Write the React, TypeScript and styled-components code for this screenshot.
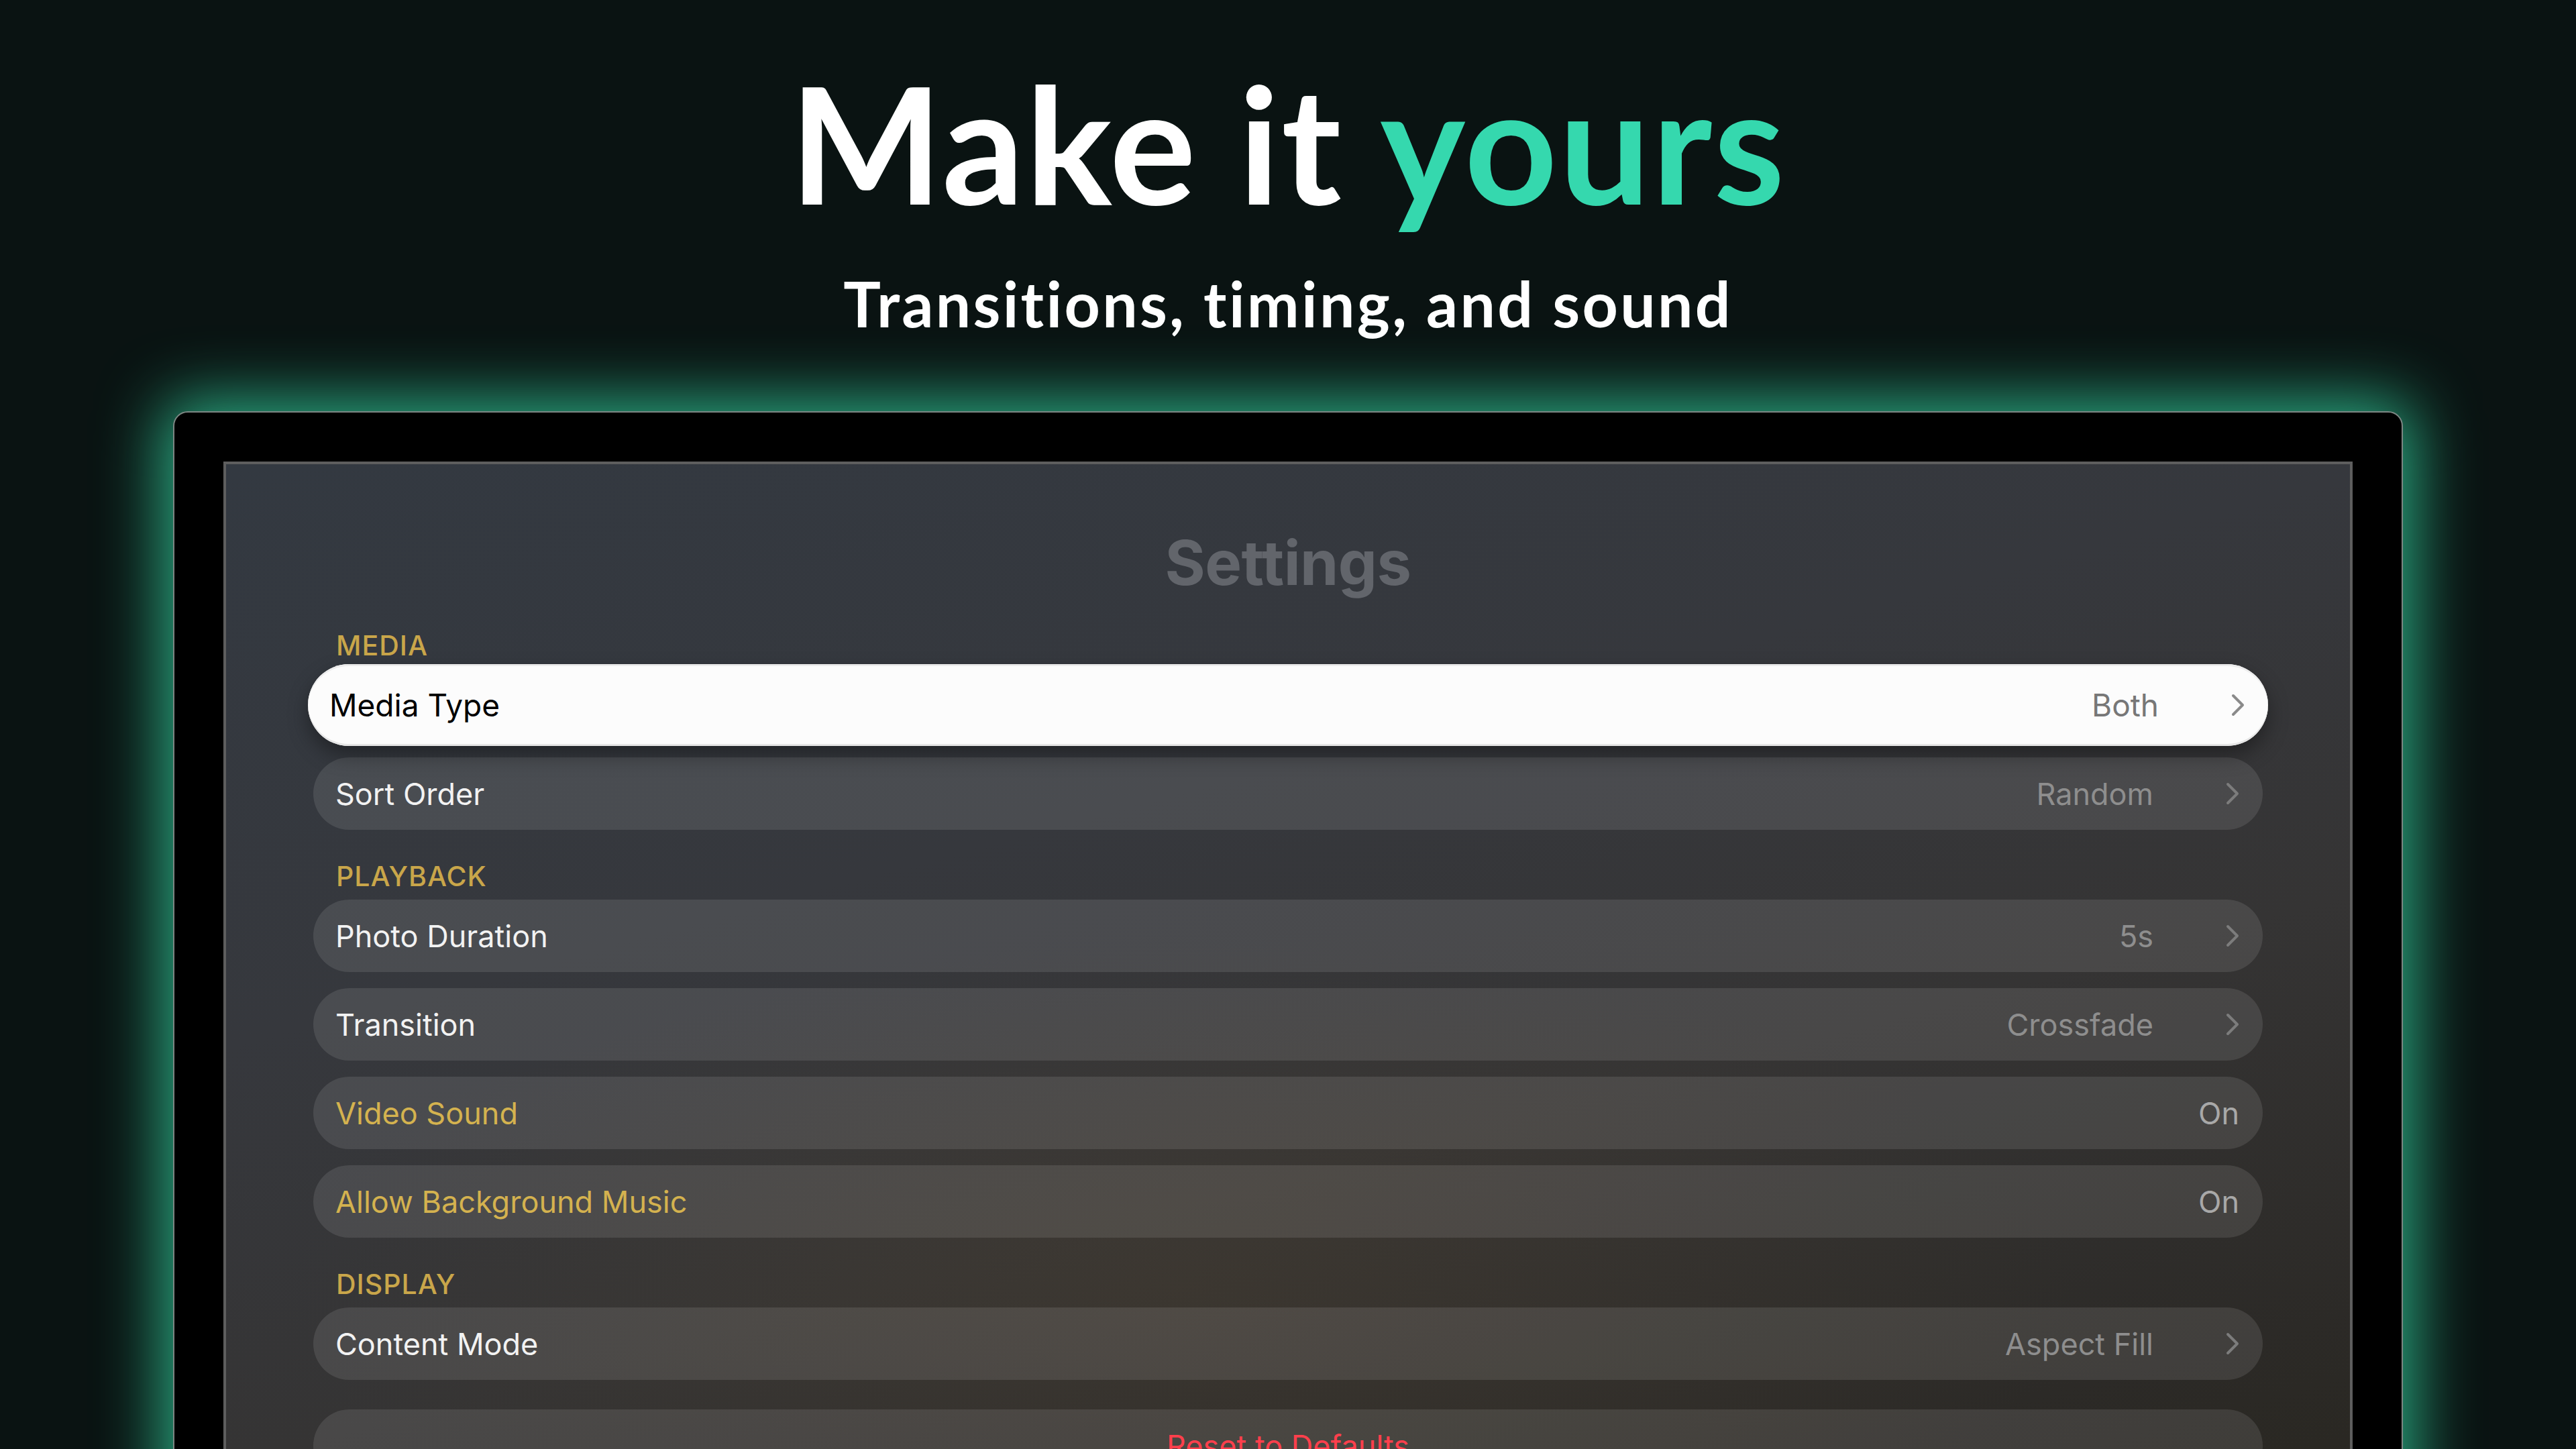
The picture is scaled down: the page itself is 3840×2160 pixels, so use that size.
import React from 'react';
import styled, { createGlobalStyle } from 'styled-components';

const GlobalStyle = createGlobalStyle`
    html, body {
        margin: 0;
        padding: 0;
        background: #0a1312;
    }
`;

type Row = {
    label: string;
    value: string;
    chevron?: boolean;
    focused?: boolean;
    accent?: boolean;
};

type Section = {
    title: string;
    rows: Row[];
};

const sections: Section[] = [
    {
        title: 'MEDIA',
        rows: [
            { label: 'Media Type', value: 'Both', chevron: true, focused: true },
            { label: 'Sort Order', value: 'Random', chevron: true },
        ],
    },
    {
        title: 'PLAYBACK',
        rows: [
            { label: 'Photo Duration', value: '5s', chevron: true },
            { label: 'Transition', value: 'Crossfade', chevron: true },
            { label: 'Video Sound', value: 'On', accent: true },
            { label: 'Allow Background Music', value: 'On', accent: true },
        ],
    },
    {
        title: 'DISPLAY',
        rows: [{ label: 'Content Mode', value: 'Aspect Fill', chevron: true }],
    },
];

const Chevron = ({ color }: { color: string }) => (
    <svg width="20" height="34" viewBox="0 0 20 34" fill="none">
        <path d="M3 3 L17 17 L3 31" stroke={color} strokeWidth="4" strokeLinecap="round" strokeLinejoin="round" />
    </svg>
);

const App = () => {
    return (
        <Page>
            <GlobalStyle />
            <Headline>
                Make it <Accent>yours</Accent>
            </Headline>
            <Subline>Transitions, timing, and sound</Subline>
            <Frame>
                <Screen>
                    <ScreenTitle>Settings</ScreenTitle>
                    <Sections>
                        {sections.map((section) => (
                            <SectionBlock key={section.title}>
                                <SectionHeader>{section.title}</SectionHeader>
                                <RowList>
                                    {section.rows.map((row) => (
                                        <SettingRow key={row.label} focused={row.focused}>
                                            <RowLabel focused={row.focused} accent={row.accent}>
                                                {row.label}
                                            </RowLabel>
                                            <RowValue focused={row.focused} toggle={!row.chevron}>
                                                {row.value}
                                            </RowValue>
                                            {row.chevron && (
                                                <ChevronWrap>
                                                    <Chevron color={row.focused ? '#8a8a8a' : '#7c7c7c'} />
                                                </ChevronWrap>
                                            )}
                                        </SettingRow>
                                    ))}
                                </RowList>
                            </SectionBlock>
                        ))}
                        <ResetRow>Reset to Defaults</ResetRow>
                    </Sections>
                </Screen>
            </Frame>
        </Page>
    );
};

export default App;


const Page = styled.div`
    width: 3840px;
    height: 2160px;
    overflow: hidden;
    background: #0a1312;
    display: flex;
    flex-direction: column;
    align-items: center;
    padding-top: 91px;
    box-sizing: border-box;
`;

const Headline = styled.h1`
    margin: 0;
    font-family: Lato, 'Open Sans', sans-serif;
    font-weight: 700;
    font-size: 241px;
    line-height: 1;
    color: #ffffff;
    letter-spacing: 2.5px;
`;

const Accent = styled.span`
    color: #35d8ae;
`;

const Subline = styled.h2`
    margin: 74px 0 0;
    font-family: Lato, 'Open Sans', sans-serif;
    font-weight: 700;
    font-size: 93px;
    line-height: 1;
    color: #ffffff;
    letter-spacing: 3.3px;
`;

const Frame = styled.div`
    margin-top: 114px;
    width: 3324px;
    flex: 1 0 auto;
    min-height: 1700px;
    box-sizing: border-box;
    background: #000;
    border: 2px solid #7c8683;
    border-radius: 22px;
    padding: 73px 73px 0;
    box-shadow: 0 0 95px 16px rgba(48, 195, 148, 0.88);
`;

const Screen = styled.div`
    height: 100%;
    box-sizing: border-box;
    border: 4px solid #5e5e5e;
    border-bottom: none;
    padding: 99px 130px 120px;
    background:
        radial-gradient(ellipse 60% 45% at 45% 75%, rgba(90, 72, 45, 0.22), transparent 70%),
        linear-gradient(165deg, #333941 0%, #36383d 35%, #353434 60%, #2c2a27 85%, #28261f 100%);
    font-family: Inter, 'Noto Sans', sans-serif;
`;

const ScreenTitle = styled.div`
    text-align: center;
    font-size: 92px;
    line-height: 96px;
    font-weight: 700;
    letter-spacing: -0.5px;
    color: #62656b;
`;

const Sections = styled.div`
    margin-top: 55px;
    display: flex;
    flex-direction: column;
    gap: 49px;
`;

const SectionBlock = styled.div`
    display: flex;
    flex-direction: column;
`;

const SectionHeader = styled.div`
    padding-left: 34px;
    font-size: 41px;
    line-height: 41px;
    font-weight: 500;
    letter-spacing: 1px;
    color: #c9a64a;
    margin-bottom: 14px;
`;

const RowList = styled.div`
    display: flex;
    flex-direction: column;
    gap: 24px;
`;

const SettingRow = styled.div<{ focused?: boolean }>`
    height: ${({ focused }) => (focused ? '122px' : '108px')};
    margin: ${({ focused }) => (focused ? '-7px -8px' : '0')};
    display: flex;
    align-items: center;
    padding: ${({ focused }) => (focused ? '0 35px 0 32px' : '0 35px 0 33px')};
    border-radius: 61px;
    background: ${({ focused }) => (focused ? '#fcfcfc' : 'rgba(255, 255, 255, 0.1)')};
    box-shadow: ${({ focused }) =>
        focused ? 'inset 0 -3px 0 #e6e6e6, inset 0 3px 0 #ececec, 0 14px 30px rgba(0, 0, 0, 0.35)' : 'none'};
    position: relative;
    z-index: ${({ focused }) => (focused ? 1 : 0)};
`;

const RowLabel = styled.div<{ focused?: boolean; accent?: boolean }>`
    flex: 1;
    font-size: ${({ focused }) => (focused ? '46px' : '45px')};
    color: ${({ focused, accent }) => (focused ? '#000' : accent ? '#d4b24f' : '#f2f2f2')};
`;

const RowValue = styled.div<{ focused?: boolean; toggle?: boolean }>`
    font-size: ${({ focused }) => (focused ? '46px' : '45px')};
    color: ${({ focused, toggle }) => (focused ? '#777777' : toggle ? '#a8a8a8' : '#8e8e8e')};
`;

const ChevronWrap = styled.div`
    margin-left: 108px;
    display: flex;
    align-items: center;
`;

const ResetRow = styled.div`
    margin-top: -5px;
    height: 108px;
    border-radius: 54px;
    background: rgba(255, 255, 255, 0.1);
    display: flex;
    align-items: center;
    justify-content: center;
    font-size: 45px;
    color: #ff3f4c;
`;
